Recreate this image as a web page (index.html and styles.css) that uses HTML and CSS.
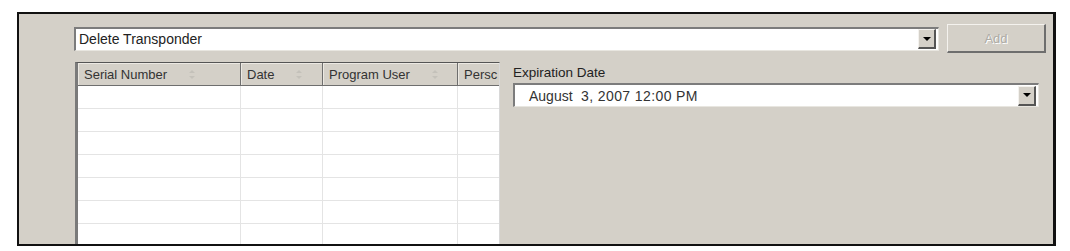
FILE: index.html
```html
<!DOCTYPE html>
<html>
<head>
    <title>Delete Transponder</title>
    <link rel="stylesheet" href="styles.css">
</head>
<body>
<div class="frame">
    <div class="top-row">
        <div class="combo">
            <span class="combo-text">Delete Transponder</span>
            <span class="drop-btn"><span class="arrow"></span></span>
        </div>
        <button class="add-btn" disabled>Add</button>
    </div>
    <div class="bottom-row">
        <div class="grid">
            <div class="grid-head">
                <div class="hcell">Serial Number <span class="sort"></span></div>
                <div class="hcell">Date <span class="sort"></span></div>
                <div class="hcell">Program User <span class="sort"></span></div>
                <div class="hcell">Persc</div>
            </div>
            <div class="grid-row"><div></div><div></div><div></div><div></div></div>
            <div class="grid-row"><div></div><div></div><div></div><div></div></div>
            <div class="grid-row"><div></div><div></div><div></div><div></div></div>
            <div class="grid-row"><div></div><div></div><div></div><div></div></div>
            <div class="grid-row"><div></div><div></div><div></div><div></div></div>
            <div class="grid-row"><div></div><div></div><div></div><div></div></div>
            <div class="grid-row"><div></div><div></div><div></div><div></div></div>
        </div>
        <div class="panel">
            <div class="panel-label">Expiration Date</div>
            <div class="combo dtp">
                <span class="combo-text"><span class="month">August</span><span class="date">3, 2007 12:00 PM</span></span>
                <span class="drop-btn"><span class="arrow"></span></span>
            </div>
        </div>
    </div>
</div>
</body>
</html>
```

FILE: styles.css
```css
* {
	box-sizing: border-box;
}

body {
	margin: 0;
	background-color: #fff;
	font-family: "Liberation Sans", Arial, sans-serif;
	font-size: 13px;
	color: #222;
}

.frame {
	margin: 12px 0 0 17px;
	width: 1039px;
	height: 234px;
	border: 2px solid #111;
	border-right-width: 3px;
	background-color: #d4d0c8;
	padding: 10px 7px 0 55px;
	overflow: hidden;
}

.top-row {
	display: flex;
	align-items: center;
	gap: 8px;
	height: 29px;
}

.combo {
	flex: 1;
	height: 24px;
	display: flex;
	align-items: center;
	background-color: #fff;
	border-top: 2px solid #7c7c7c;
	border-left: 2px solid #7c7c7c;
	border-right: 1px solid #e8e6e0;
	border-bottom: 1px solid #e8e6e0;
}

.combo-text {
	flex: 1;
	padding-left: 3px;
	font-size: 14px;
	white-space: nowrap;
}

.drop-btn {
	width: 18px;
	height: 20px;
	margin-right: 2px;
	display: flex;
	align-items: center;
	justify-content: center;
	background-color: #d4d0c8;
	border-top: 1px solid #f4f2ee;
	border-left: 1px solid #f4f2ee;
	border-right: 2px solid #555;
	border-bottom: 2px solid #555;
}

.arrow {
	width: 0;
	height: 0;
	border-left: 4px solid transparent;
	border-right: 4px solid transparent;
	border-top: 4px solid #000;
}

.add-btn {
	width: 99px;
	height: 29px;
	font-family: inherit;
	font-size: 13px;
	color: #aeaca6;
	text-shadow: 1px 1px 0 #fff;
	background-color: #d4d0c8;
	border-top: 1px solid #f4f2ee;
	border-left: 1px solid #f4f2ee;
	border-right: 2px solid #6e6e6e;
	border-bottom: 2px solid #6e6e6e;
	padding: 0;
}

.bottom-row {
	display: flex;
	gap: 13px;
	margin-top: 9px;
}

.grid {
	width: 425px;
	margin-left: 1px;
	flex: none;
	overflow: hidden;
	background-color: #fff;
	border-left: 3px solid #7a7a7a;
	border-top: 1px solid #555;
	border-right: 1px solid #d8d8d8;
}

.grid-head,
.grid-row {
	display: grid;
	grid-template-columns: 163px 82px 135px 80px;
}

.hcell {
	height: 23px;
	display: flex;
	align-items: center;
	padding-left: 6px;
	white-space: nowrap;
	color: #333;
	background-color: #d4d0c8;
	border-bottom: 1px solid #6e6e6e;
	border-right: 1px solid #6e6e6e;
	box-shadow: inset 1px 1px 0 #ece9e3;
}

.sort {
	display: inline-block;
	width: 7px;
	height: 9px;
	margin-left: 22px;
	position: relative;
}

.sort::before,
.sort::after {
	content: "";
	position: absolute;
	left: 0;
	border-left: 3px solid transparent;
	border-right: 3px solid transparent;
}

.sort::before {
	top: 0;
	border-bottom: 3px solid #c4c1ba;
}

.sort::after {
	bottom: 0;
	border-top: 3px solid #c4c1ba;
}

.grid-row div {
	height: 23px;
	border-right: 1px solid #e4e4e4;
	border-bottom: 1px solid #e4e4e4;
}

.panel {
	flex: 1;
	margin-right: 7px;
	padding-top: 3px;
}

.panel-label {
	height: 16px;
	line-height: 16px;
	margin-bottom: 2px;
	font-size: 13.5px;
	color: #222;
}

.dtp {
	flex: none;
	width: 100%;
}

.dtp .combo-text {
	padding-left: 14px;
	color: #333;
}

.month {
	display: inline-block;
	width: 52px;
}

.date {
	letter-spacing: 0.4px;
}
```
